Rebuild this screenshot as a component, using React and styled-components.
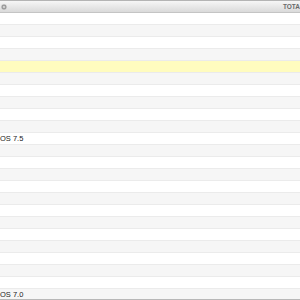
import React from 'react'
import styled, { createGlobalStyle } from 'styled-components'

const Global = createGlobalStyle`
  html, body {
    margin: 0;
    padding: 0;
    background: #ffffff;
  }
  body {
    font-family: "Liberation Sans", Arial, sans-serif;
  }
`

const Frame = styled.div`
  width: 300px;
  height: 300px;
  overflow: hidden;
  display: flex;
  flex-direction: column;
  background: #ffffff;
`

const Header = styled.div`
  flex: none;
  height: 11px;
  border-top: 1px solid #b4b4b4;
  border-bottom: 1px solid #c4c4c4;
  background: linear-gradient(#f6f6f6, #dadada);
  display: flex;
  align-items: center;
`

const Gear = styled.svg`
  width: 6px;
  height: 6px;
  margin-left: 1px;
  flex: none;
`

const HeadLabel = styled.span`
  margin-left: auto;
  white-space: nowrap;
  font-size: 6.5px;
  font-weight: bold;
  color: #6a6a6a;
  line-height: 11px;
`

const Row = styled.div`
  flex: none;
  height: ${p => (p.$last ? '10px' : '11px')};
  border-bottom: 1px solid ${p => (p.$last ? '#b8b8b8' : '#ebebeb')};
  background: ${p => (p.$hl ? '#fffcbf' : p.$odd ? '#f6f6f6' : '#ffffff')};
  display: flex;
  align-items: center;
  font-size: 7.5px;
  color: #222222;
  line-height: 11px;
  white-space: nowrap;
`

const labels = { 10: 'OS 7.5', 23: 'OS 7.0' }

export default function App() {
  const rows = Array.from({ length: 24 }, (_, i) => i)
  return (
    <Frame>
      <Global />
      <Header>
        <Gear viewBox="0 0 12 12">
          <g fill="#9a9a9a">
            <circle cx="6" cy="6" r="4" />
            <rect x="5" y="0" width="2" height="12" />
            <rect x="0" y="5" width="12" height="2" />
            <rect x="5" y="0" width="2" height="12" transform="rotate(45 6 6)" />
            <rect x="5" y="0" width="2" height="12" transform="rotate(-45 6 6)" />
          </g>
          <circle cx="6" cy="6" r="1.8" fill="#e8e8e8" />
        </Gear>
        <HeadLabel>TOTA</HeadLabel>
      </Header>
      {rows.map(i => (
        <Row key={i} $odd={i % 2 === 1} $hl={i === 4} $last={i === 23}>
          {labels[i]}
        </Row>
      ))}
    </Frame>
  )
}
